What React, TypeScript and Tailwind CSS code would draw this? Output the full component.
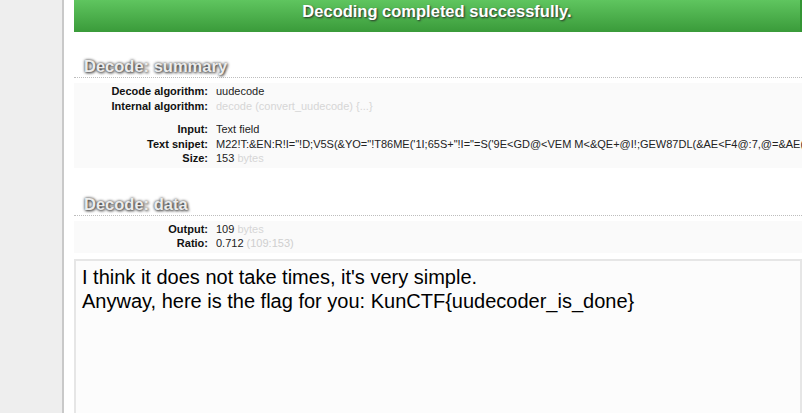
const snippet =
  'M22!T:&EN:R!I="!D;V5S(&YO="!T86ME(\'1I;65S+"!I="=S(\'9E<GD@<VEM M<&QE+@I!;GEW87DL(&AE<F4@:7,@=&AE(&9L86<@9F]R(\'EO=3H@2W5N0U1&>W5U';

const decoded =
  "I think it does not take times, it's very simple.\nAnyway, here is the flag for you: KunCTF{uudecoder_is_done}";

function Heading({ title, className }: { title: string; className: string }) {
  return (
    <div className={`border-b border-dotted border-[#bdbdbd] pb-[1px] ${className}`}>
      <h2 className="pl-[10px] text-[16.5px] font-bold leading-[20px] text-[#ececec] [text-shadow:0_0_3px_#333,1px_1px_3px_#444]">
        {title}
      </h2>
    </div>
  );
}

function Row({ label, children }: { label: string; children: React.ReactNode }) {
  return (
    <>
      <div className="text-right font-bold text-[#111]">{label}</div>
      <div className="overflow-hidden whitespace-nowrap text-[#222]">{children}</div>
    </>
  );
}

function Dim({ children }: { children: React.ReactNode }) {
  return <span className="text-[#d6d6d6]">{children}</span>;
}

export default function App() {
  return (
    <div className="flex h-[413px] w-[808px] overflow-hidden bg-white font-['Liberation_Sans',Arial,sans-serif]">
      {/* left column */}
      <div className="w-[64px] shrink-0 border-r-2 border-[#c9c9c9] bg-[#eeeeee]" />

      <div className="min-w-0 flex-1 overflow-hidden pl-[10px] pr-[6px]">
        <div className="h-[32px] border-r-2 border-[#349534] bg-gradient-to-b from-[#5fc55f] to-[#3a9b3a] pt-[1px] text-center text-[16.5px] font-bold leading-[20px] text-white [text-shadow:1px_1px_2px_#2a2a2a]">
          Decoding completed successfully.
        </div>

        <Heading title="Decode: summary" className="mt-[24px]" />

        <div className="mt-[5px] bg-[#fafafa] pb-[2px] pt-[1px] text-[11px] leading-[14.5px]">
          <div className="grid grid-cols-[134px_1fr] gap-x-[8px]">
            <Row label="Decode algorithm:">uudecode</Row>
            <Row label="Internal algorithm:">
              <Dim>decode (convert_uudecode) {"{...}"}</Dim>
            </Row>
          </div>
          <div className="mt-[9px] grid grid-cols-[134px_1fr] gap-x-[8px]">
            <Row label="Input:">Text field</Row>
            <Row label="Text snipet:">{snippet}</Row>
            <Row label="Size:">
              153 <Dim>bytes</Dim>
            </Row>
          </div>
        </div>

        <Heading title="Decode: data" className="mt-[26px]" />

        <div className="mt-[5px] bg-[#fafafa] pb-[2px] pt-[1px] text-[11px] leading-[14.5px]">
          <div className="grid grid-cols-[134px_1fr] gap-x-[8px]">
            <Row label="Output:">
              109 <Dim>bytes</Dim>
            </Row>
            <Row label="Ratio:">
              0.712 <span className="text-[#cfcfcf]">(109:153)</span>
            </Row>
          </div>
        </div>

        <textarea
          readOnly
          value={decoded}
          className="mt-[6px] block h-[220px] w-full resize-none border-2 border-[#e6e6e6] bg-[#fcfcfc] px-[6px] pt-[4px] text-[20px] leading-[24px] text-black outline-none"
        />
      </div>
    </div>
  );
}
